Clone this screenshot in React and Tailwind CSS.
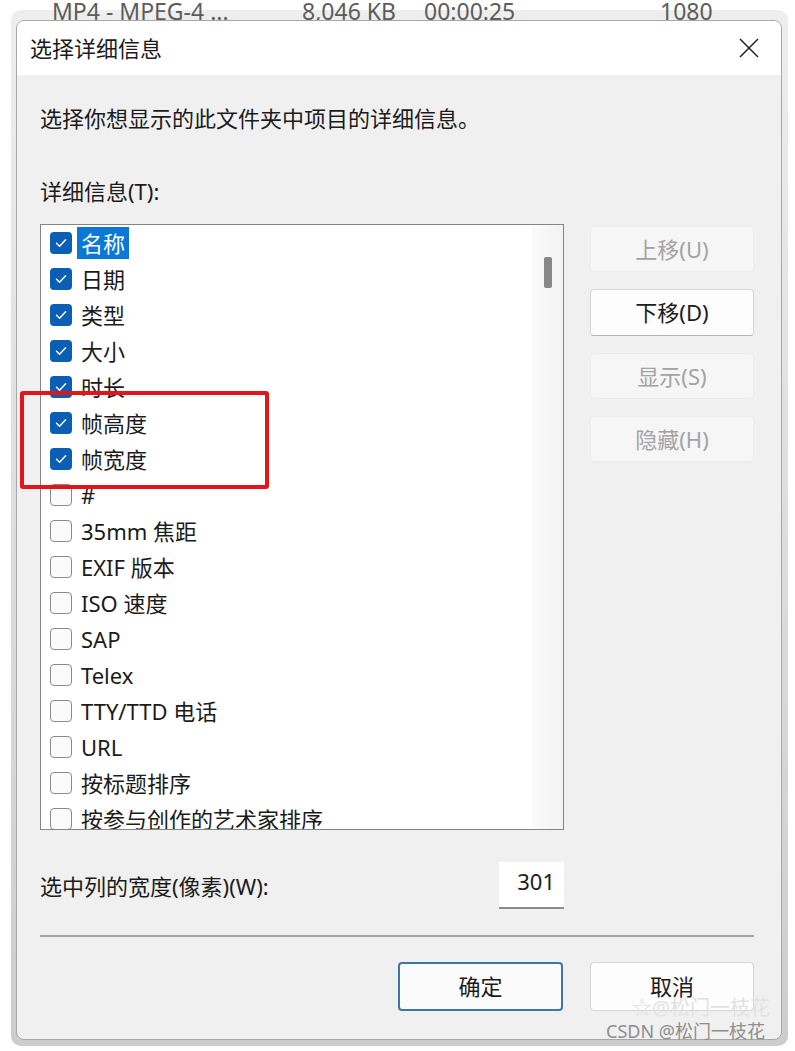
import React from "react";

const items = [
  { label: "名称", checked: true, selected: true },
  { label: "日期", checked: true },
  { label: "类型", checked: true },
  { label: "大小", checked: true },
  { label: "时长", checked: true },
  { label: "帧高度", checked: true },
  { label: "帧宽度", checked: true },
  { label: "#", checked: false },
  { label: "35mm 焦距", checked: false },
  { label: "EXIF 版本", checked: false },
  { label: "ISO 速度", checked: false },
  { label: "SAP", checked: false },
  { label: "Telex", checked: false },
  { label: "TTY/TTD 电话", checked: false },
  { label: "URL", checked: false },
  { label: "按标题排序", checked: false },
  { label: "按参与创作的艺术家排序", checked: false },
];

function Check({ checked }) {
  if (checked) {
    return (
      <div className="w-[22px] h-[22px] rounded-[4px] bg-[#0a5fb4] flex items-center justify-center shrink-0">
        <svg width="14" height="14" viewBox="0 0 14 14" fill="none">
          <path d="M2.5 7.2 L5.6 10.2 L11.6 3.8" stroke="white" strokeWidth="1.4" strokeLinecap="round" strokeLinejoin="round" />
        </svg>
      </div>
    );
  }
  return <div className="w-[22px] h-[22px] rounded-[4px] border border-[#8a8a8a] bg-[#fbfbfb] shrink-0" />;
}

function SideButton({ children, enabled }) {
  if (enabled) {
    return (
      <div className="h-[47px] w-[164px] rounded-[4px] bg-[#fdfdfd] border border-[#d6d6d6] border-b-[#b5b5b5] flex items-center justify-center text-[22px] text-[#1b1b1b]">
        {children}
      </div>
    );
  }
  return (
    <div className="h-[46px] w-[164px] rounded-[4px] bg-[#f6f6f6] border border-[#ebebeb] flex items-center justify-center text-[22px] text-[#a3a3a3]">
      {children}
    </div>
  );
}

export default function App() {
  return (
    <div className="relative w-[795px] h-[1051px] overflow-hidden bg-white font-['Noto_Sans','Noto_Sans_CJK_SC',sans-serif] text-[#1b1b1b]">
      {/* background window text, cropped at top */}
      <div className="absolute top-[-4px] left-0 w-full h-[30px] text-[23px] leading-[30px] text-[#5c5c5c] z-10">
        <span className="absolute left-[52px]">MP4 - MPEG-4 ...</span>
        <span className="absolute left-[302px]">8,046 KB</span>
        <span className="absolute left-[424px]">00:00:25</span>
        <span className="absolute left-[660px]">1080</span>
      </div>

      <div className="ml-[11px] mt-[10px] w-[777px] h-[1036px] rounded-[10px] bg-gradient-to-b from-[#eeeeee] to-[#cdcdcd] pl-[5px] pt-[10px]">
        <div className="relative z-20 w-[766px] h-[1020px] rounded-[8px] border border-[#a8a8a8] bg-[#f0f0f0] overflow-hidden flex flex-col">
          {/* title bar */}
          <div className="h-[54px] bg-white flex items-center justify-between pl-[13px] pr-[22px] shrink-0">
            <span className="text-[22px] leading-none">选择详细信息</span>
            <svg width="20" height="20" viewBox="0 0 20 20">
              <path d="M1 1 L19 19 M19 1 L1 19" stroke="#222" strokeWidth="1.5" />
            </svg>
          </div>

          {/* body */}
          <div className="pl-[23px] pr-[27px] flex flex-col">
            <div className="pt-[31px] text-[22px] leading-[24px]">选择你想显示的此文件夹中项目的详细信息。</div>
            <div className="mt-[49px] text-[22px] leading-[24px]">详细信息(T):</div>

            <div className="mt-[21px] flex">
              <div className="w-[524px] h-[606px] border border-[#858585] bg-white flex overflow-hidden">
                <div className="flex-1 flex flex-col">
                  {items.map((it) => (
                    <div key={it.label} className="h-[36px] shrink-0 flex items-center pl-[9px]">
                      <Check checked={it.checked} />
                      <div
                        className={
                          it.selected
                            ? "ml-[5px] h-[32px] px-[4px] flex items-center bg-[#0a78d4] text-white text-[22px] whitespace-nowrap"
                            : "ml-[9px] text-[22px] whitespace-nowrap"
                        }
                      >
                        {it.label}
                      </div>
                    </div>
                  ))}
                </div>
                <div className="w-[31px] shrink-0 bg-gradient-to-r from-[#fafafa] to-[#f3f3f3] flex justify-center pt-[32px]">
                  <div className="w-[8px] h-[31px] rounded-[2px] bg-[#878787]" />
                </div>
              </div>

              <div className="ml-[26px] mt-[2px] flex flex-col gap-[17px]">
                <SideButton>上移(U)</SideButton>
                <SideButton enabled>下移(D)</SideButton>
                <SideButton>显示(S)</SideButton>
                <SideButton>隐藏(H)</SideButton>
              </div>
            </div>

            <div className="mt-[32px] w-[524px] flex items-center justify-between">
              <span className="text-[22px] leading-[24px]">选中列的宽度(像素)(W):</span>
              <div className="w-[65px] h-[47px] bg-white border-b-2 border-[#8c8c8c] flex items-center justify-end pr-[9px] text-[22px] pb-[6px]">
                301
              </div>
            </div>

            <div className="mt-[26px] h-[2px] bg-[#a6a6a6]" />

            <div className="mt-[25px] flex justify-end gap-[27px]">
              <div className="w-[165px] h-[49px] rounded-[4px] border-2 border-[#3b76ac] bg-[#fbfbfb] flex items-center justify-center text-[22px]">
                确定
              </div>
              <div className="w-[164px] h-[49px] rounded-[4px] border border-[#d4d4d4] bg-[#fdfdfd] flex items-center justify-center text-[22px]">
                取消
              </div>
            </div>
          </div>
        </div>
      </div>

      {/* red highlight box */}
      <div className="absolute left-[20px] top-[391px] w-[249px] h-[98px] border-4 border-[#e2151b] rounded-[3px] z-30" />

      {/* watermarks */}
      <div className="absolute left-[632px] top-[998px] text-[20px] leading-none text-[#e2e2e2] z-30 whitespace-nowrap">☆@松门一枝花</div>
      <div className="absolute left-[606px] top-[1022px] text-[18px] leading-none text-[#8e8e8e] z-30 whitespace-nowrap">CSDN @松门一枝花</div>
    </div>
  );
}
